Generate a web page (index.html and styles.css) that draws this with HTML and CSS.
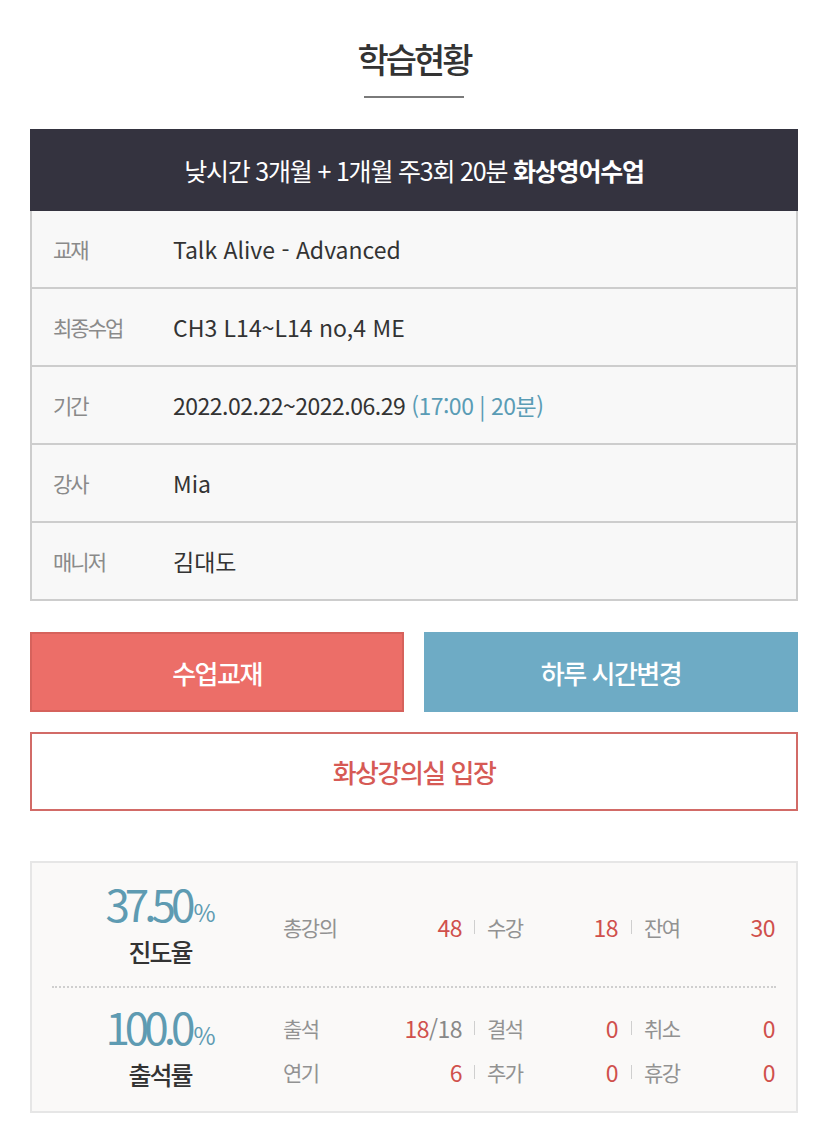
FILE: index.html
```html
<!DOCTYPE html>
<html lang="ko">
<head>
<meta charset="utf-8">
<title>학습현황</title>
<link rel="stylesheet" href="styles.css">
</head>
<body>
<div class="page">
  <h1 class="title">학습현황</h1>
  <div class="title-bar"></div>

  <div class="course"><span>낮시간 3개월 + 1개월 주3회 20분 <strong>화상영어수업</strong></span></div>

  <div class="info">
    <div class="info-row"><span class="info-label">교재</span><span class="info-value">Talk Alive - Advanced</span></div>
    <div class="info-row"><span class="info-label">최종수업</span><span class="info-value">CH3 L14~L14 no,4 ME</span></div>
    <div class="info-row"><span class="info-label">기간</span><span class="info-value info-date">2022.02.22~2022.06.29 <span class="info-time">(17:00 | 20분)</span></span></div>
    <div class="info-row"><span class="info-label">강사</span><span class="info-value">Mia</span></div>
    <div class="info-row"><span class="info-label">매니저</span><span class="info-value">김대도</span></div>
  </div>

  <div class="btn-row">
    <a class="btn btn-red">수업교재</a>
    <a class="btn btn-blue">하루 시간변경</a>
  </div>
  <a class="btn btn-outline">화상강의실 입장</a>

  <div class="stats">
    <div class="stat-row">
      <div class="stat-main">
        <div class="stat-pct">37.50<small>%</small></div>
        <div class="stat-name">진도율</div>
      </div>
      <div class="stat-grid">
        <span class="s-label">총강의</span><span class="s-num">48</span>
        <span class="s-sep"></span>
        <span class="s-label">수강</span><span class="s-num">18</span>
        <span class="s-sep"></span>
        <span class="s-label">잔여</span><span class="s-num">30</span>
      </div>
    </div>
    <div class="stat-row stat-row-2">
      <div class="stat-main">
        <div class="stat-pct">100.0<small>%</small></div>
        <div class="stat-name">출석률</div>
      </div>
      <div class="stat-grid">
        <span class="s-label">출석</span><span class="s-num">18<span class="s-total">/18</span></span>
        <span class="s-sep"></span>
        <span class="s-label">결석</span><span class="s-num">0</span>
        <span class="s-sep"></span>
        <span class="s-label">취소</span><span class="s-num">0</span>
        <span class="s-label">연기</span><span class="s-num">6</span>
        <span class="s-sep"></span>
        <span class="s-label">추가</span><span class="s-num">0</span>
        <span class="s-sep"></span>
        <span class="s-label">휴강</span><span class="s-num">0</span>
      </div>
    </div>
  </div>
</div>
</body>
</html>
```

FILE: styles.css
```css
* { box-sizing: border-box; }

body {
  margin: 0;
  background: #ffffff;
  font-family: "Noto Sans CJK KR", sans-serif;
  color: #333;
}

.page {
  padding: 0 30px 24px;
}

.title {
  margin: 0;
  padding-top: 36px;
  font-size: 34px;
  line-height: 46px;
  font-weight: 500;
  letter-spacing: -3px;
  text-align: center;
  color: #333;
}

.title-bar {
  width: 100px;
  height: 2px;
  margin: 14px auto 0;
  background: #7a7a7a;
}

.course {
  margin-top: 31px;
  height: 82px;
  display: flex;
  align-items: center;
  justify-content: center;
  background: #34333f;
  color: #fff;
  font-size: 25px;
  letter-spacing: -1.2px;
  font-weight: 400;
}
.course strong { font-weight: 700; }

.info {
  border: 2px solid #cdcdcd;
  border-top: 0;
  background: #f8f8f8;
}

.info-row {
  display: flex;
  align-items: center;
  height: 78px;
  padding-left: 21px;
  border-bottom: 2px solid #cdcdcd;
}
.info-row:last-child { border-bottom: 0; height: 76px; }

.info-label {
  width: 120px;
  font-size: 21px;
  letter-spacing: -2px;
  color: #8a8a8a;
}

.info-value {
  font-size: 23px;
  color: #333;
}

.info-date { letter-spacing: -0.5px; }

.info-time { color: #5a9cb5; }

.btn-row {
  display: flex;
  gap: 20px;
  margin-top: 31px;
}

.btn {
  display: flex;
  align-items: center;
  justify-content: center;
  height: 80px;
  font-size: 26px;
  letter-spacing: -1.5px;
  font-weight: 500;
  text-decoration: none;
}

.btn-red {
  flex: 1;
  background: #ec6e68;
  border: 2px solid #d6625c;
  color: #fff;
}

.btn-blue {
  flex: 1;
  background: #6eabc5;
  border: 2px solid #6eabc5;
  color: #fff;
}

.btn-outline {
  margin-top: 20px;
  height: 79px;
  background: #fff;
  border: 2px solid #d26b67;
  color: #d65a55;
}

.stats {
  margin-top: 50px;
  border: 2px solid #e6e6e6;
  background: #faf9f8;
  padding: 0 20px;
}

.stat-row {
  display: flex;
  align-items: center;
  padding: 16px 0 11px;
  border-bottom: 2px dotted #cfcfcf;
}

.stat-row-2 {
  padding: 14px 0 13px;
  border-bottom: 0;
}

.stat-main {
  width: 231px;
}

.stat-pct {
  width: 216px;
  text-align: center;
  font-size: 44px;
  line-height: 48px;
  height: 48px;
  color: #5e9bb2;
  letter-spacing: -5px;
}
.stat-pct small {
  font-size: 24px;
  line-height: 0;
  letter-spacing: -1px;
  margin-left: 3px;
}

.stat-name {
  width: 216px;
  text-align: center;
  font-size: 25px;
  line-height: 48px;
  font-weight: 500;
  letter-spacing: -2px;
  color: #333;
}

.stat-grid {
  flex: 1;
  display: grid;
  grid-template-columns: 62px 117px 11px 1px 13px 62px 69px 11px 1px 14px 62px 69px;
  grid-auto-rows: 44px;
  align-items: center;
}

.s-label {
  font-size: 21px;
  letter-spacing: -1.5px;
  color: #929292;
}

.s-num {
  text-align: right;
  font-size: 23px;
  letter-spacing: -0.5px;
  color: #d0504c;
}

.s-total { color: #888; }

.s-sep {
  grid-column: span 3;
  justify-self: center;
  width: 1px;
  height: 14px;
  background: #cfcfcf;
}
```
